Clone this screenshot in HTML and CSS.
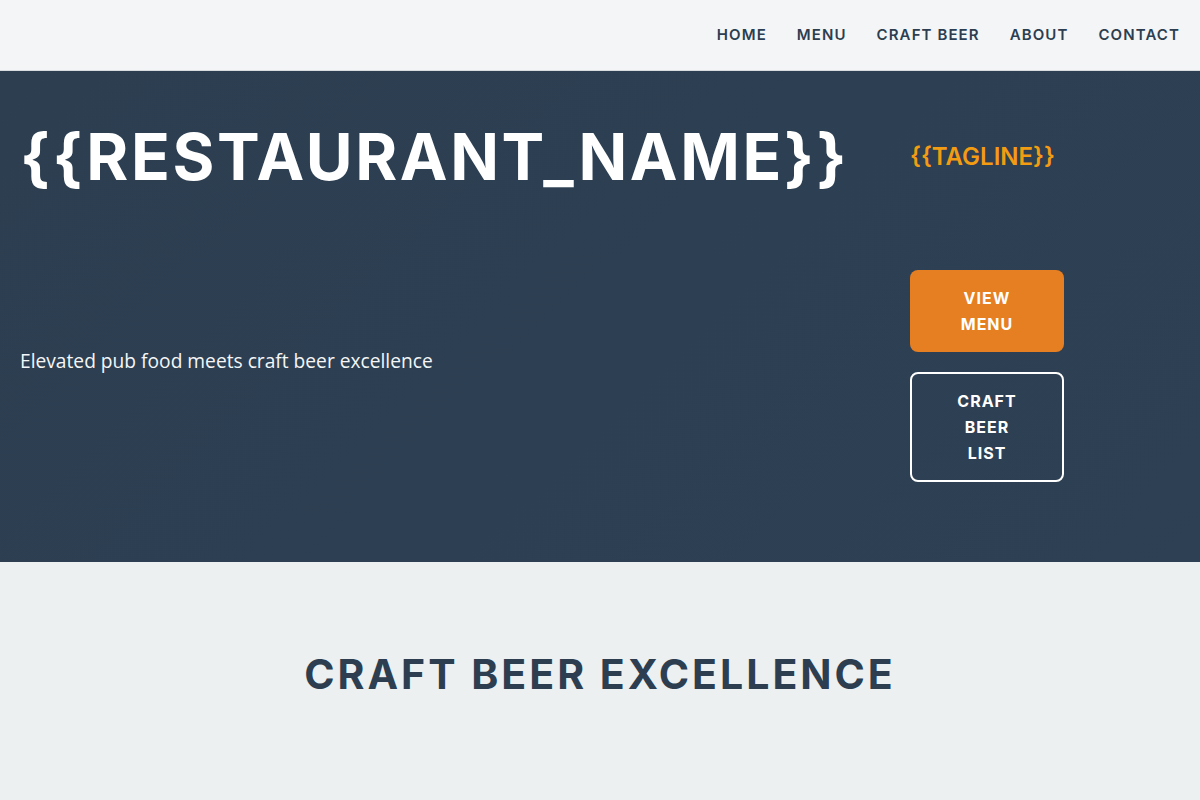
FILE: index.html
```html
<!DOCTYPE html>
<html lang="en">
<head>
<meta charset="utf-8">
<title>{{RESTAURANT_NAME}}</title>
<link rel="stylesheet" href="styles.css">
</head>
<body>
<header class="site-header">
  <nav class="nav">
    <a class="nav-link" href="#">HOME</a>
    <a class="nav-link" href="#">MENU</a>
    <a class="nav-link" href="#">CRAFT BEER</a>
    <a class="nav-link" href="#">ABOUT</a>
    <a class="nav-link" href="#">CONTACT</a>
  </nav>
</header>
<section class="hero">
  <div class="hero-main">
    <h1 class="hero-title">{{RESTAURANT_NAME}}</h1>
    <p class="hero-text">Elevated pub food meets craft beer excellence</p>
  </div>
  <div class="hero-side">
    <div class="tagline">{{TAGLINE}}</div>
    <a class="btn btn-primary" href="#">VIEW<br>MENU</a>
    <a class="btn btn-outline" href="#">CRAFT<br>BEER<br>LIST</a>
  </div>
</section>
<section class="beer">
  <h2 class="section-title">CRAFT BEER EXCELLENCE</h2>
</section>
</body>
</html>
```

FILE: styles.css
```css
* { box-sizing: border-box; }
html, body { margin: 0; padding: 0; }
body {
  font-family: "Open Sans", "Liberation Sans", sans-serif;
  background: #ecf0f1;
  color: #2c3e50;
}
.site-header {
  height: 71px;
  background: #f4f5f7;
  border-bottom: 1px solid #d9dcdf;
  display: flex;
  align-items: center;
  justify-content: flex-end;
  padding: 0 20px 1px 0;
}
.nav { display: flex; gap: 30px; }
.nav-link {
  font-family: Inter, "Liberation Sans", sans-serif;
  font-weight: 600;
  font-size: 15px;
  letter-spacing: 1.1px;
  color: #2c3e50;
  text-decoration: none;
}
.hero {
  background: linear-gradient(135deg, #2c3e50 0%, #2e4054 100%);
  display: flex;
  padding: 48px 136px 80px 20px;
  color: #fff;
}
.hero-main { flex: 1; }
.hero-title {
  margin: 0;
  font-family: Inter, "Liberation Sans", sans-serif;
  font-weight: 700;
  font-size: 64px;
  line-height: 76px;
  letter-spacing: 2.6px;
  color: #fff;
}
.hero-text {
  margin: 152px 0 0;
  font-size: 19.2px;
  line-height: 27px;
  color: #f4f6f8;
}
.hero-side {
  width: 154px;
  display: flex;
  flex-direction: column;
  gap: 20px;
}
.tagline {
  margin-top: 23px;
  margin-bottom: 78px;
  font-family: Inter, "Liberation Sans", sans-serif;
  font-weight: 600;
  font-size: 24px;
  line-height: 30px;
  color: #f39c12;
}
.btn {
  display: block;
  text-align: center;
  font-family: Inter, "Liberation Sans", sans-serif;
  font-weight: 700;
  font-size: 16px;
  line-height: 26px;
  letter-spacing: 1px;
  color: #fff;
  text-decoration: none;
  border-radius: 8px;
  padding: 15px 10px;
}
.btn-primary { background: #e67e22; height: 82px; }
.btn-outline { border: 2px solid #fff; height: 110px; padding-top: 14px; }
.beer {
  padding: 88px 20px 80px;
  text-align: center;
}
.section-title {
  margin: 0;
  font-family: Inter, "Liberation Sans", sans-serif;
  font-weight: 700;
  font-size: 41px;
  line-height: 48px;
  letter-spacing: 3px;
  color: #2c3e50;
}
```
